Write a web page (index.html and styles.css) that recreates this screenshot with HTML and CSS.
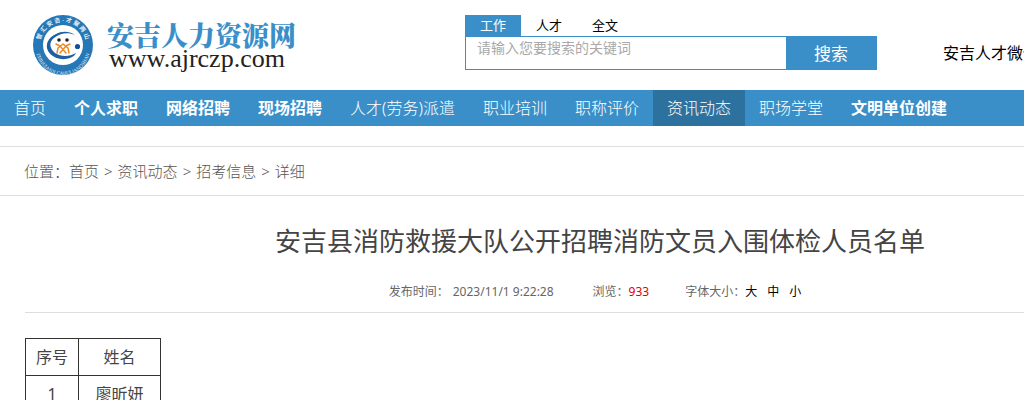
FILE: index.html
```html
<!DOCTYPE html>
<html lang="zh-CN">
<head>
    <meta charset="UTF-8">
    <meta name="viewport" content="width=device-width, initial-scale=1.0">
    <title>安吉县消防救援大队公开招聘消防文员入围体检人员名单</title>
    <link rel="stylesheet" href="styles.css">
</head>
<body>
    <header class="header">
        <a class="logo" href="#">
            <svg class="logo-mark" viewBox="0 0 60 60" aria-hidden="true">
                <defs>
                    <path id="arcTop" d="M8.500 38 A23 23 0 1 1 51.500 38"/>
                    <path id="arcBottom" d="M3 33 A27 27 0 0 0 57 33"/>
                </defs>
                <circle cx="30" cy="30" r="30" fill="#2577b5"/>
                <circle cx="30" cy="30" r="20" fill="#fff"/>
                <text class="ring-cn"><textPath href="#arcTop" startOffset="50%">智 汇 安 吉 · 才 聚 两 山</textPath></text>
                <text class="ring-en"><textPath href="#arcBottom" startOffset="50%">ZHIHUIANJI CAIJULIANGSHAN</textPath></text>
                <path d="M42 20 C36 16 29 16 23 19 C15 23 12 29 15 36 C19 43 29 46 37 43 C40 42 42 40 43 38 C36 42 28 42 22 38 C16 33 16 27 21 23 C27 18 35 17 42 20Z" fill="#1c5fa5"/>
                <circle cx="44.500" cy="31.500" r="2.600" fill="#174f97"/>
                <circle cx="26" cy="25" r="1.800" fill="#222"/>
                <circle cx="34" cy="25" r="1.800" fill="#222"/>
                <path d="M23 29 L27 31 L33 38 M30 29 L25 33 L24 38 M30 29 L35 33 L36 38 M37 29 L33 31 L27 38" fill="none" stroke="#ee8a22" stroke-width="1.500" stroke-linecap="round" stroke-linejoin="round"/>
            </svg>
            <span class="logo-text">
                <span class="logo-name">安吉人力资源网</span>
                <span class="logo-url">www.ajrczp.com</span>
            </span>
        </a>
        <form class="search">
            <div class="search-tabs">
                <button type="button" class="tab active">工作</button>
                <button type="button" class="tab">人才</button>
                <button type="button" class="tab">全文</button>
            </div>
            <div class="search-row">
                <input class="search-input" type="text" aria-label="关键词" placeholder="请输入您要搜索的关键词">
                <button class="search-btn" type="submit">搜索</button>
            </div>
        </form>
        <div class="wechat">安吉人才微信</div>
    </header>

    <nav class="nav">
        <a href="#">首页</a>
        <a href="#" class="strong">个人求职</a>
        <a href="#" class="strong">网络招聘</a>
        <a href="#" class="strong">现场招聘</a>
        <a href="#">人才(劳务)派遣</a>
        <a href="#">职业培训</a>
        <a href="#">职称评价</a>
        <a href="#" class="current">资讯动态</a>
        <a href="#">职场学堂</a>
        <a href="#" class="strong">文明单位创建</a>
    </nav>

    <div class="crumbs">
        <span>位置：</span><a href="#">首页</a><span class="sep">&gt;</span><a href="#">资讯动态</a><span class="sep">&gt;</span><a href="#">招考信息</a><span class="sep">&gt;</span><span>详细</span>
    </div>

    <main class="article">
        <h1>安吉县消防救援大队公开招聘消防文员入围体检人员名单</h1>
        <div class="meta">
            <span>发布时间：<time>2023/11/1 9:22:28</time></span>
            <span>浏览：<em>933</em></span>
            <span class="sizes">字体大小：<a href="#">大</a><a href="#">中</a><a href="#">小</a></span>
        </div>
        <table class="list">
            <thead>
                <tr><th>序号</th><th>姓名</th></tr>
            </thead>
            <tbody>
                <tr><td>1</td><td>廖昕妍</td></tr>
            </tbody>
        </table>
    </main>
</body>
</html>
```
FILE: styles.css
```css
* {
    box-sizing: border-box;
}

html {
    overflow: hidden;
}

body {
    margin: 0;
    min-width: 1200px;
    background: #fff;
    color: #444;
    font-family: "Noto Sans", "Noto Sans CJK SC", sans-serif;
    font-size: 16px;
}

a {
    color: inherit;
    text-decoration: none;
}

button, input {
    font-family: inherit;
    border: 0;
    border-radius: 0;
    margin: 0;
}

/* header */
.header {
    display: flex;
    align-items: flex-start;
    padding: 15px 0 15px 33px;
}

.logo {
    display: flex;
    gap: 14px;
    width: 432px;
}

.logo-mark {
    width: 60px;
    height: 60px;
}

.ring-cn, .ring-en {
    fill: #e4f1fa;
    text-anchor: middle;
}

.ring-cn {
    font-size: 6px;
    font-weight: bold;
}

.ring-en {
    font-family: "Liberation Serif", serif;
    font-size: 5px;
}

.logo-text {
    display: flex;
    flex-direction: column;
    padding-top: 8px;
}

.logo-name {
    color: #3a8fc9;
    font-family: "Noto Serif CJK SC", "Noto Sans CJK SC", serif;
    font-size: 27px;
    font-weight: 900;
    line-height: 24px;
}

.logo-url {
    color: #222;
    font-family: "Liberation Serif", serif;
    font-size: 26px;
    line-height: 24px;
    padding-left: 2px;
}

/* search */
.search {
    width: 412px;
}

.search-tabs {
    display: flex;
}

.tab {
    width: 56px;
    height: 21px;
    padding: 0;
    background: none;
    color: #000;
    font-size: 13px;
    line-height: 21px;
}

.tab.active {
    background: #3a8fc9;
    color: #fff;
}

.search-row {
    display: flex;
    height: 34px;
}

.search-input {
    flex: 1;
    min-width: 0;
    padding: 0 11px 12px;
    border: 1px solid #3a8fc9;
    font-size: 14px;
}

.search-input::placeholder {
    color: #a9a9a9;
}

.search-btn {
    width: 90px;
    padding: 0 2px 2px 0;
    background: #3a8fc9;
    color: #fff;
    font-size: 17px;
}

.wechat {
    padding: 26px 0 0 66px;
    color: #000;
    line-height: 24px;
}

/* navigation */
.nav {
    display: flex;
    background: #3a8fc9;
    color: #fff;
    font-weight: 300;
    line-height: 36px;
}

.nav a {
    padding: 0 14px;
}

.nav .strong {
    font-weight: bold;
}

.nav .current {
    background: #2d729f;
}

/* breadcrumb */
.crumbs {
    margin-top: 20px;
    padding: 0 24px;
    border-top: 1px solid #ddd;
    border-bottom: 1px solid #ddd;
    color: #555;
    font-size: 15px;
    font-weight: 300;
    line-height: 48px;
}

.crumbs .sep {
    margin: 0 5px;
}

/* article */
.article {
    padding: 24px 25px;
}

h1 {
    margin: 0;
    font-size: 26px;
    font-weight: normal;
    line-height: 42px;
    text-align: center;
}

.meta {
    display: flex;
    justify-content: center;
    gap: 36px;
    margin-bottom: 25px;
    padding: 18px 0 8px;
    border-bottom: 1px solid #ddd;
    color: #666;
    font-size: 12px;
    line-height: 24px;
}

.meta time {
    margin: 0 3px 0 4px;
}

.meta em {
    color: #e00000;
    font-style: normal;
}

.sizes a {
    margin-right: 10px;
    color: #000;
}

.list {
    border-collapse: collapse;
}

.list th, .list td {
    padding: 6px 10px;
    border: 1px solid #333;
    font-weight: normal;
    line-height: 24px;
    text-align: center;
}

.list th:last-child {
    width: 82px;
}
```
